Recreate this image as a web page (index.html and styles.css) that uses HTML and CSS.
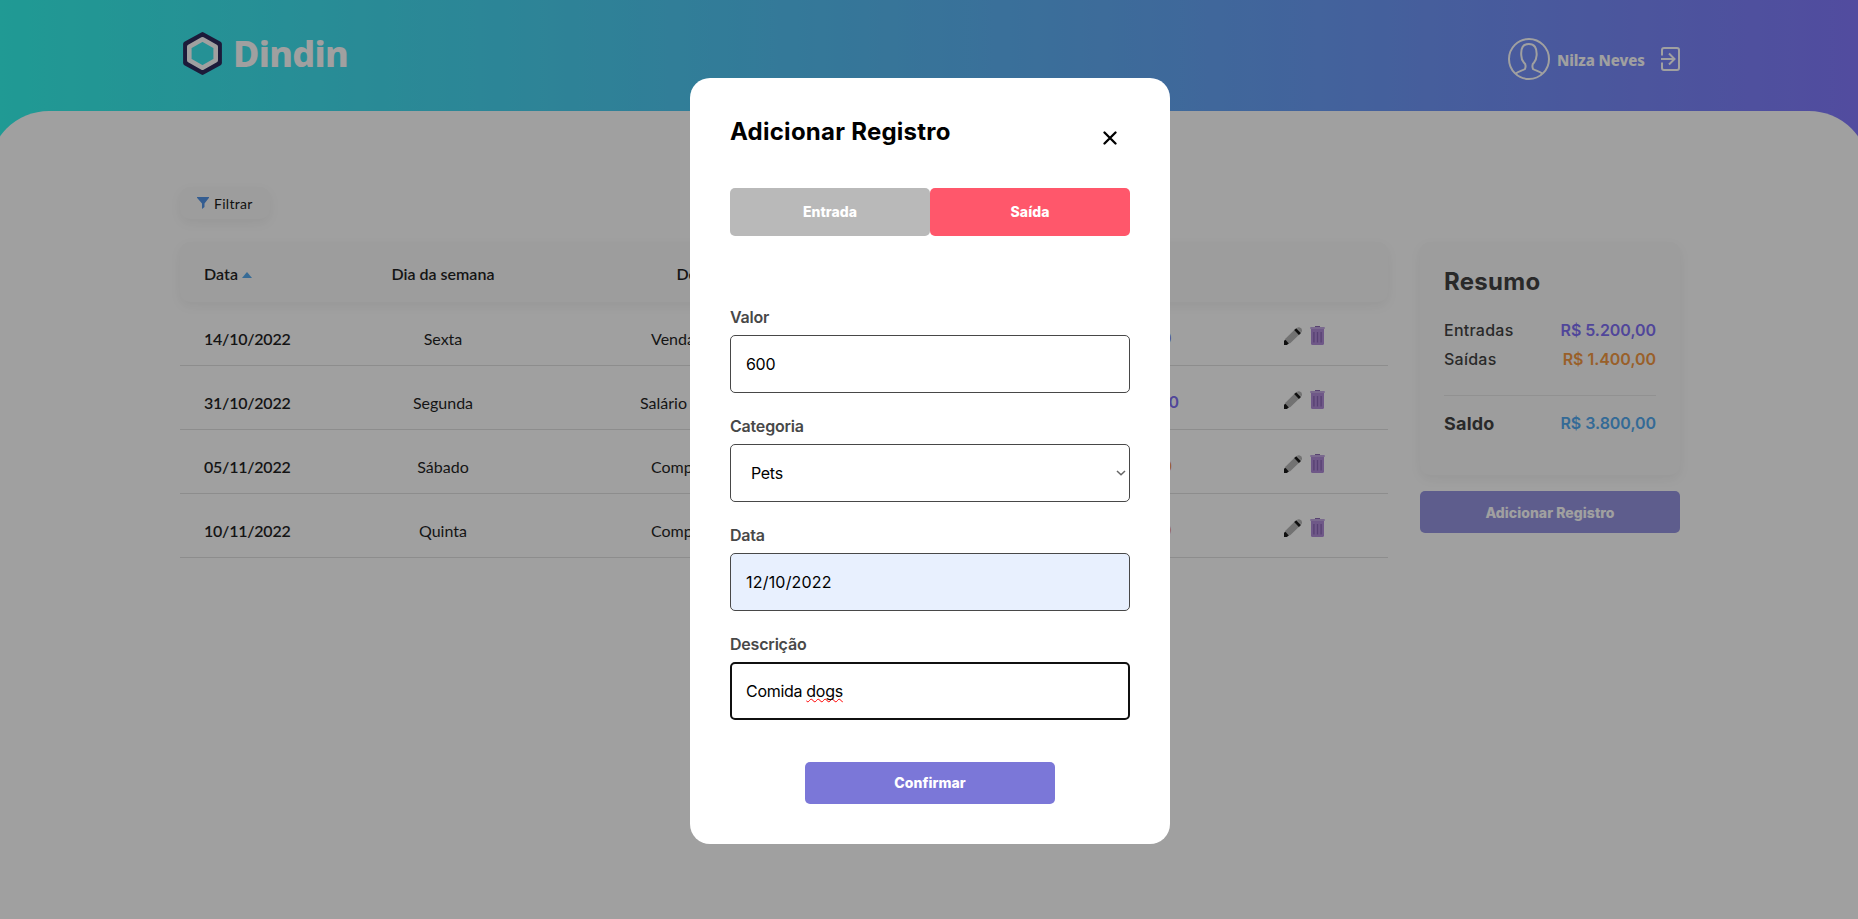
FILE: index.html
```html
<!DOCTYPE html>
<html lang="pt-BR">
<head>
<meta charset="utf-8">
<title>Dindin</title>
<link rel="stylesheet" href="styles.css">
</head>
<body>
<svg class="sprite" aria-hidden="true">
  <symbol id="pencil" viewBox="0 0 18 18">
    <path d="M1.6 11.4 10.8 2.6 15.6 7.2 6.2 16.2 1.4 17Z" fill="#b2b2b2"/>
    <path d="M0 14 1.2 12.6 4.8 16.4 2.8 18H0Z" fill="#101010"/>
    <path d="M10.2 3 12.3 1.2 17 6 14.9 7.9Z" fill="#101010"/>
    <path d="M12.7 1Q15-.8 17 1.2 19 3.4 17.2 5.6Z" fill="#b2b2b2"/>
  </symbol>
  <symbol id="trash" viewBox="0 0 15 19">
    <path d="M5 0h5v1.2H5z" fill="#8764b0"/>
    <path d="M1 2.6h13V17.4Q14 19 12.4 19H2.6Q1 19 1 17.4Z" fill="#ae87d8"/>
    <path d="M.3 1h14.4v2H.3z" fill="#c0a3e2"/>
    <path d="M3.9 6v10.5M7.5 6v10.5M11.1 6v10.5" stroke="#8660b4" stroke-width="1.3"/>
  </symbol>
</svg>

<header class="header">
  <div class="brand">
    <svg class="brand-mark" viewBox="0 0 39 43">
      <path d="M19.5 2.6 36.4 12v19L19.5 40.4 2.6 31V12Z" fill="none" stroke="#242256" stroke-width="5" stroke-linejoin="round"/>
      <path d="M19.5 7.3 32.7 14.7v13.6L19.5 35.7 6.3 28.3V14.7Z" fill="none" stroke="#fff" stroke-width="4.6" stroke-linejoin="round"/>
    </svg>
    <span class="brand-name">Dindin</span>
  </div>
  <div class="user">
    <svg class="avatar" viewBox="0 0 42 42" fill="none" stroke="#fff">
      <circle cx="21" cy="21" r="20" stroke-width="2"/>
      <path d="M7.5 35.8C10 33.2 14.5 32.6 17 31Q18.6 26.5 15.9 24.6 13.3 21.5 13.3 17.5 12.3 6 20.7 6 29.4 6 28.6 17.5 28.4 21.5 26 24.6 23.4 26.5 25 31C27.5 32.6 32 33.2 34.5 35.8" stroke-width="2"/>
    </svg>
    <span class="user-name">Nilza Neves</span>
    <svg class="logout" viewBox="0 0 19 24" fill="none" stroke="#fff" stroke-width="2">
      <path d="M1 8.5V3Q1 1 3 1H16Q18 1 18 3V21Q18 23 16 23H3Q1 23 1 21V15.5"/>
      <path d="M0 12H13.5M8 6.5 13.5 12 8 17.5"/>
    </svg>
  </div>
</header>

<main class="panel">
  <div class="content">
    <button class="filter">
      <svg viewBox="0 0 12 12"><path d="M0 0h12v.8L7.5 6.4V10L5 12V6.4L0 .8Z" fill="#4c8fe6"/></svg>
      <span>Filtrar</span>
    </button>
    <div class="columns">
      <section class="table">
        <div class="row row-head">
          <span class="date">Data <i class="sort"></i></span><span>Dia da semana</span><span>Descrição</span><span>Categoria</span><span>Valor</span>
        </div>
        <div class="row">
          <span class="date">14/10/2022</span><span>Sexta</span><span class="desc">Venda</span><span>Vendas</span><span class="value in">R$ 200,00</span>
          <span class="actions"><svg class="pencil"><use href="#pencil"/></svg><svg class="trash"><use href="#trash"/></svg></span>
        </div>
        <div class="row">
          <span class="date">31/10/2022</span><span>Segunda</span><span class="desc desc-wide">Salário</span><span>Salário</span><span class="value in">R$ 5.000,00</span>
          <span class="actions"><svg class="pencil"><use href="#pencil"/></svg><svg class="trash"><use href="#trash"/></svg></span>
        </div>
        <div class="row">
          <span class="date">05/11/2022</span><span>Sábado</span><span class="desc">Compra</span><span>Roupas</span><span class="value out">R$ 400,00</span>
          <span class="actions"><svg class="pencil"><use href="#pencil"/></svg><svg class="trash"><use href="#trash"/></svg></span>
        </div>
        <div class="row">
          <span class="date">10/11/2022</span><span>Quinta</span><span class="desc">Compra</span><span>Mercado</span><span class="value out">R$ 999,00</span>
          <span class="actions"><svg class="pencil"><use href="#pencil"/></svg><svg class="trash"><use href="#trash"/></svg></span>
        </div>
      </section>
      <aside class="side">
        <div class="summary">
          <h2>Resumo</h2>
          <div class="line"><span>Entradas</span><b class="in">R$ 5.200,00</b></div>
          <div class="line"><span>Saídas</span><b class="out">R$ 1.400,00</b></div>
          <div class="line total"><strong>Saldo</strong><b class="balance">R$ 3.800,00</b></div>
        </div>
        <button class="primary add">Adicionar Registro</button>
      </aside>
    </div>
  </div>
</main>

<div class="overlay">
  <div class="modal">
    <div class="modal-head">
      <h1>Adicionar Registro</h1>
      <svg class="close" viewBox="0 0 14 14"><path d="M1.5 1.5 12.5 12.5M12.5 1.5 1.5 12.5" stroke="#000" stroke-width="2.3" stroke-linecap="round"/></svg>
    </div>
    <div class="toggle"><button class="entry">Entrada</button><button class="exit">Saída</button></div>
    <div class="field"><label>Valor</label><div class="input">600</div></div>
    <div class="field"><label>Categoria</label><div class="input select">Pets
      <svg viewBox="0 0 10 6"><path d="M1 1 5 4.8 9 1" fill="none" stroke="#666" stroke-width="1.5"/></svg></div></div>
    <div class="field"><label>Data</label><div class="input filled">12/10/2022</div></div>
    <div class="field"><label>Descrição</label><div class="input focused"><span>Comida <span class="typo">dogs</span></span></div></div>
    <button class="primary confirm">Confirmar</button>
  </div>
</div>
</body>
</html>
```

FILE: styles.css
```css
* { box-sizing: border-box; margin: 0; padding: 0; }
body {
  height: 919px;
  overflow: hidden;
  display: flex;
  flex-direction: column;
  font-family: Lato, sans-serif;
  background: linear-gradient(90deg, rgb(42,245,235), rgb(70,199,242) 36%, rgb(125,115,253));
}
button { border: 0; font: inherit; }
.sprite { position: absolute; width: 0; height: 0; }

.header {
  height: 111px;
  width: 1500px;
  margin: 0 0 0 180px;
  display: flex;
  justify-content: space-between;
  flex: none;
}
.brand { display: flex; height: 43px; margin: 32px 0 0 3px; align-items: center; gap: 11px; }
.brand-mark { width: 39px; height: 43px; }
.brand-name { font: 800 36px "Noto Sans", sans-serif; letter-spacing: -.7px; color: #fff; }
.user { display: flex; height: 42px; margin-top: 38px; align-items: center; color: #fff; }
.avatar { width: 42px; height: 42px; }
.user-name { width: 88px; font: 800 15px "Noto Sans", sans-serif; letter-spacing: -.1px; white-space: nowrap; margin: 2px 16px 0 7px; }
.logout { width: 19px; height: 24px; }

.panel {
  flex: 1;
  margin: 0 -11px;
  border-radius: 60px 60px 0 0;
  background: #fff;
}
.content { width: 1500px; margin-left: 191px; padding-top: 76px; }
.filter {
  width: 90px;
  height: 32px;
  border-radius: 10px;
  background: #fafafa;
  box-shadow: 0 4px 12px rgba(0,0,0,.06);
  display: flex;
  align-items: center;
  padding-left: 17px;
  gap: 5px;
  font-size: 14px;
  letter-spacing: .3px;
  color: #111;
}
.filter svg { width: 12px; height: 12px; }
.columns { display: flex; justify-content: space-between; margin-top: 23px; }
.table { width: 1208px; }
.row {
  height: 64px;
  padding-top: 9px;
  border-bottom: 1px solid #e0e0e0;
  display: grid;
  grid-template-columns: 146px 234px 303px 187px 171px 140px;
  align-items: center;
  text-align: center;
  font-size: 16px;
  font-weight: 400;
  color: #171717;
}
.row .date { padding-left: 24px; text-align: left; font-weight: 600; letter-spacing: -.25px; }
.desc { padding-left: 91px; text-align: left; }
.desc-wide { padding-left: 80px; }
.row-head {
  height: 60px;
  padding: 3px 0 0;
  border: 0;
  border-radius: 10px;
  background: #fafafa;
  box-shadow: 0 4px 12px rgba(0,0,0,.06);
  font-weight: 600;
}
.row-head .date { letter-spacing: .1px; }
.sort {
  display: inline-block;
  border: 5px solid transparent;
  border-top: 0;
  border-bottom: 6px solid #4fa7ee;
  vertical-align: 2px;
}
.value { font: 600 16px Inter, sans-serif; padding-right: 9px; }
.in { color: #7b6af5; }
.out { color: #f4943a; }
.balance { color: #4ba6ef; }
.actions { display: flex; gap: 8px; align-items: center; padding: 0 0 5px 63px; }
.pencil { width: 18px; height: 18px; }
.trash { width: 15px; height: 19px; }

.side { width: 260px; font-family: Inter, sans-serif; }
.summary {
  height: 233px;
  padding: 25px 24px 24px;
  border-radius: 10px;
  background: #fafafa;
  box-shadow: 0 4px 12px rgba(0,0,0,.06);
  color: #3a3a3a;
}
.summary h2 { font-size: 24px; line-height: 30px; letter-spacing: .3px; margin-bottom: 18px; }
.line { display: flex; justify-content: space-between; align-items: center; height: 29px; font-size: 16px; font-weight: 500; letter-spacing: .25px; }
.line b { font-weight: 600; letter-spacing: -.05px; }
.total { height: 55px; margin-top: 22px; border-top: 1px solid #e6e6e6; }
.total strong { font-size: 18px; font-weight: 700; letter-spacing: .2px; }
.primary {
  height: 42px;
  border-radius: 5px;
  background: #7b77d8;
  color: #fff;
  font: 800 14px Inter, sans-serif;
  letter-spacing: .05px;
}
.add { display: block; width: 260px; margin-top: 16px; background: #918fe0; }

.overlay {
  position: fixed;
  inset: 0;
  padding-top: 78px;
  background: rgba(17,17,18,.4);
  font-family: Inter, sans-serif;
}
.modal {
  width: 480px;
  height: 766px;
  margin: 0 0 0 690px;
  padding: 40px;
  border-radius: 20px;
  background: #fff;
  display: flex;
  flex-direction: column;
}
.modal-head { display: flex; justify-content: space-between; height: 70px; padding-right: 13px; }
.modal-head h1 { font-size: 24px; line-height: 28px; font-weight: 700; letter-spacing: .25px; }
.close { width: 14px; height: 14px; margin-top: 13px; }
.toggle { display: flex; margin-bottom: 72px; }
.toggle button {
  width: 200px;
  height: 48px;
  border-radius: 5px;
  color: #fff;
  font: 800 14px Inter, sans-serif;
  letter-spacing: .05px;
  padding-bottom: 2px;
}
.entry { background: #b9b9b9; }
.exit { background: #ff576b; }
.field { display: flex; flex-direction: column; gap: 8px; margin-bottom: 24px; }
.field label { font-size: 16px; line-height: 19px; font-weight: 600; color: #484848; letter-spacing: -.2px; }
.input {
  height: 58px;
  padding: 0 15px;
  border: 1px solid #484848;
  border-radius: 5px;
  display: flex;
  align-items: center;
  font-size: 16px;
  letter-spacing: -.3px;
  color: #000;
}
.select { padding: 0 3px 0 20px; justify-content: space-between; }
.select svg { width: 10px; height: 6px; }
.filled { background: #e8f0fe; letter-spacing: .2px; }
.focused { border: 2px solid #101010; padding: 0 14px; }
.typo { text-decoration: underline wavy #f00 1px; text-underline-offset: 1px; text-decoration-skip-ink: none; }
.confirm { width: 250px; margin: 18px auto 0; flex: none; padding-bottom: 2px; }
```
